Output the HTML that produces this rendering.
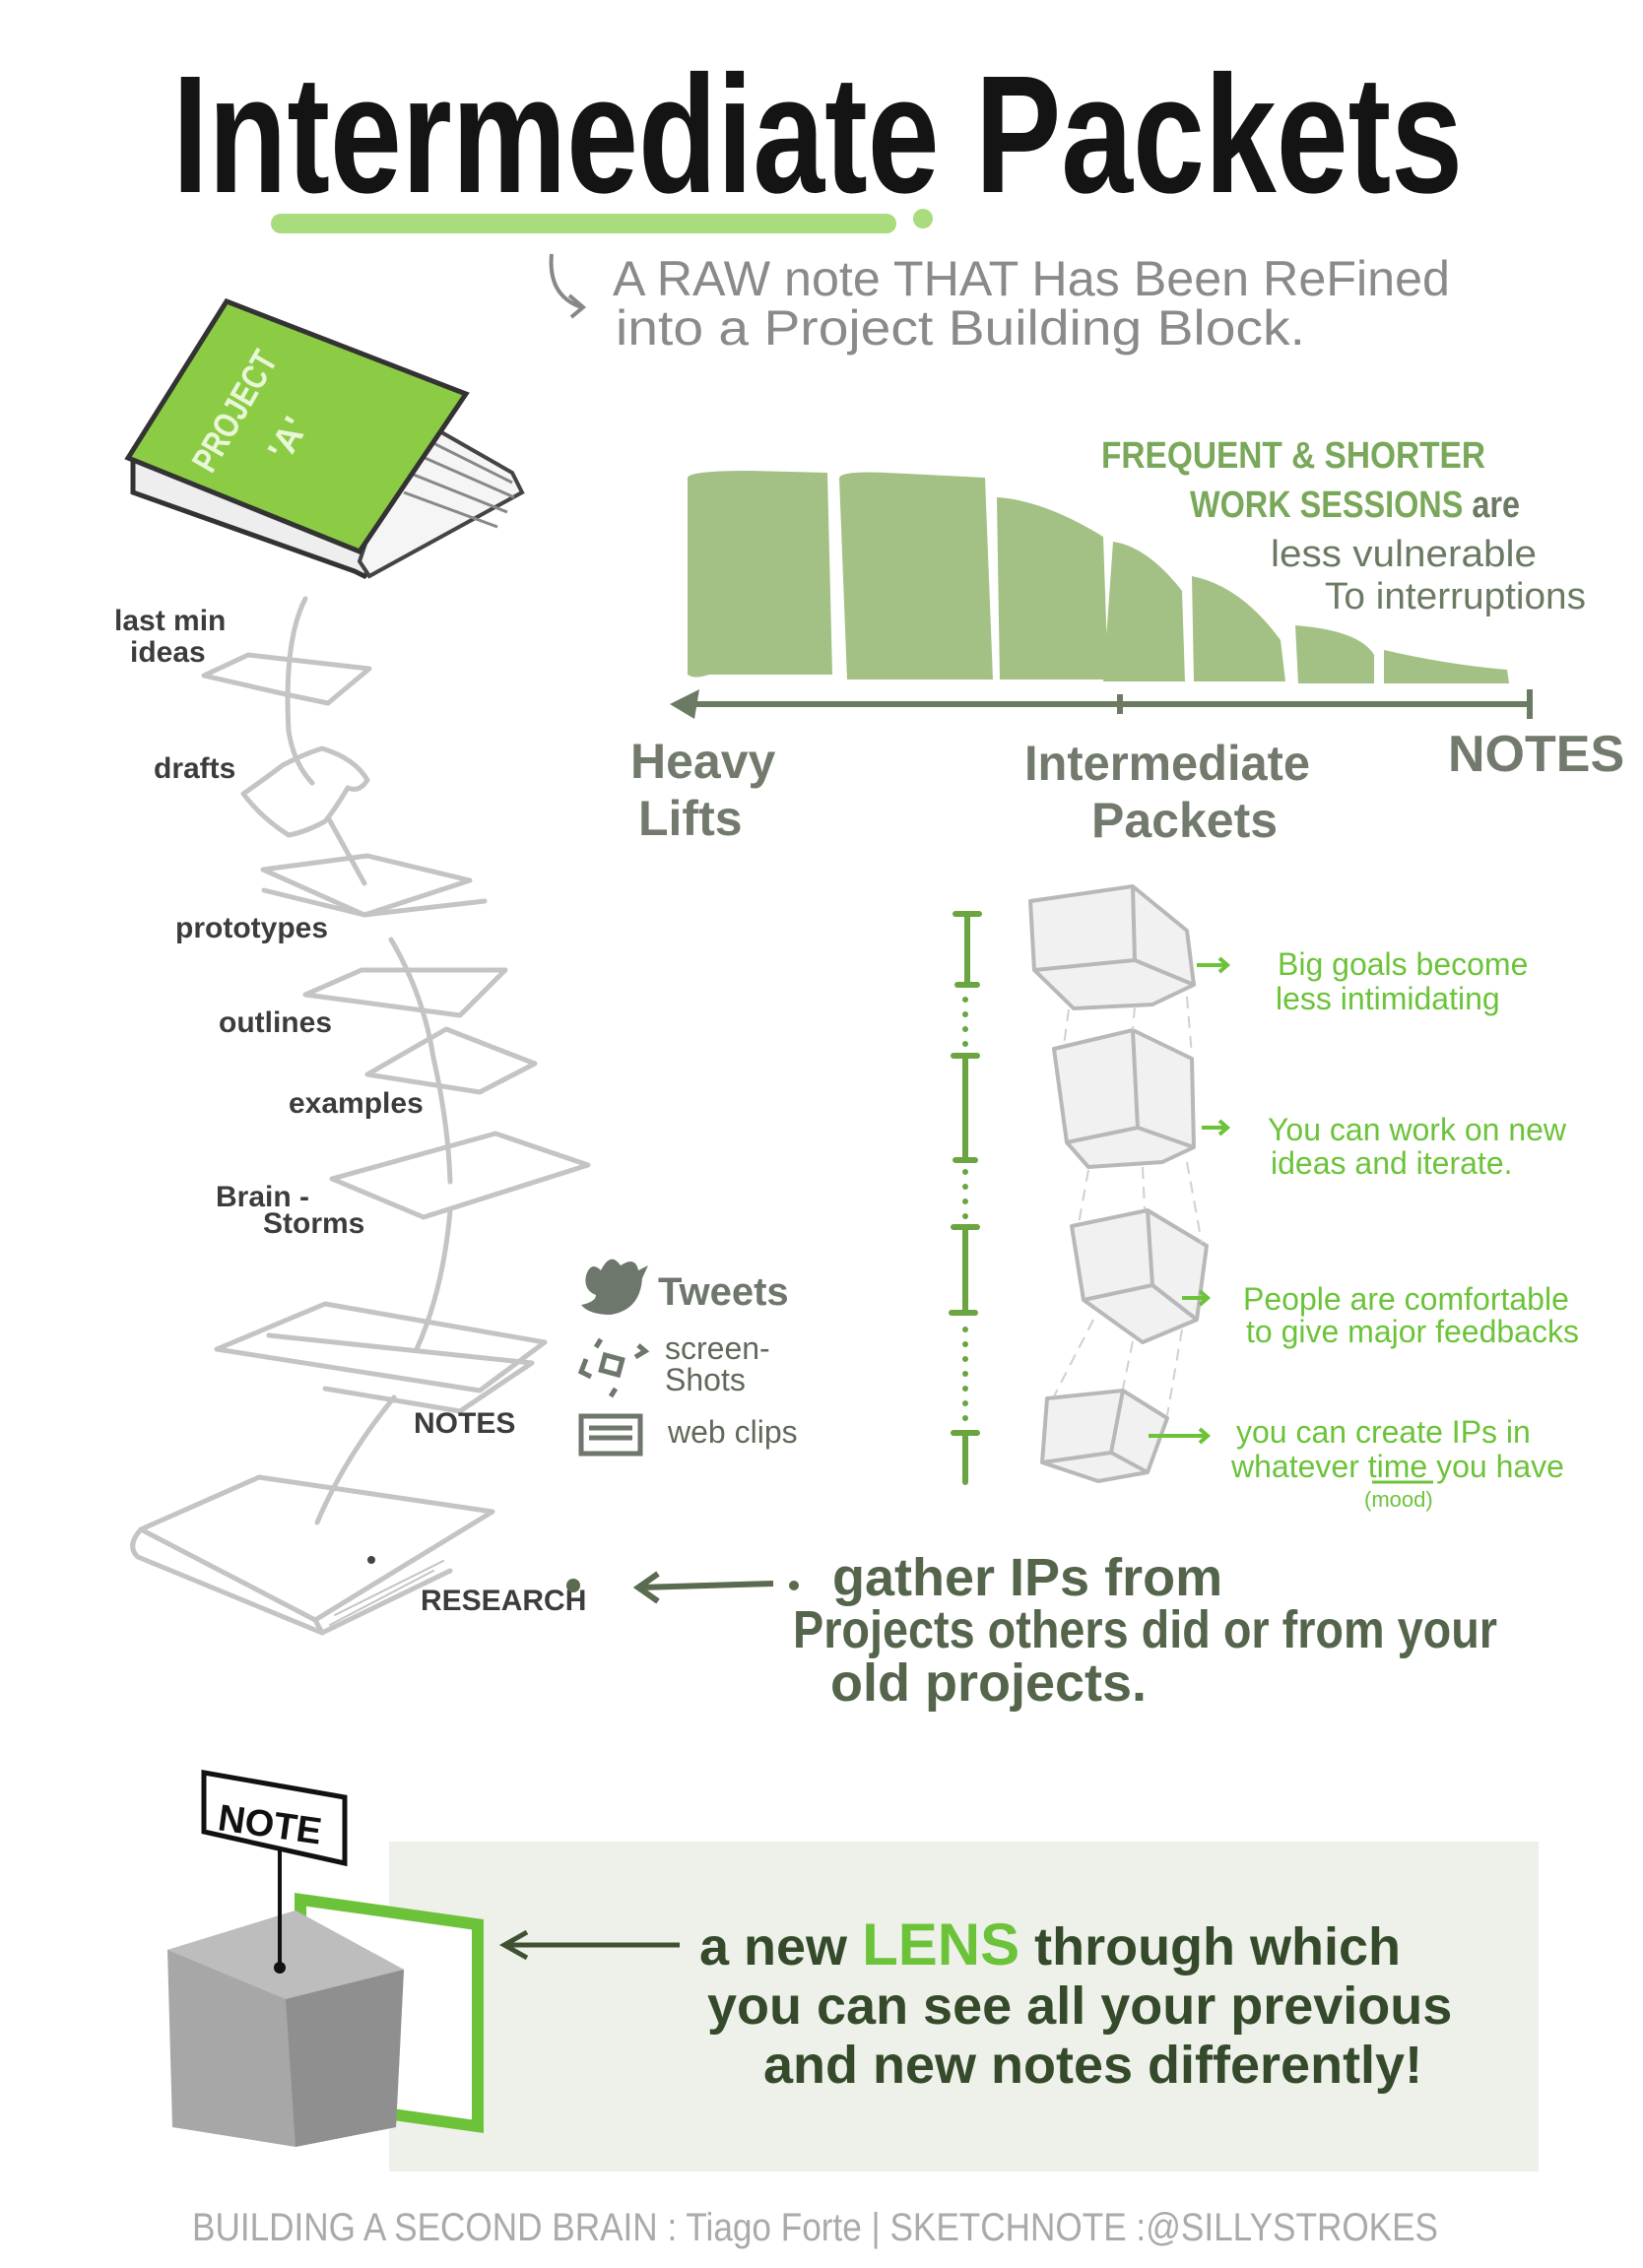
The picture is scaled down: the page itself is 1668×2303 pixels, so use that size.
<!DOCTYPE html>
<html><head><meta charset="utf-8">
<style>
html,body{margin:0;padding:0;background:#fff;}
svg{display:block;}
text{font-family:"Liberation Sans Narrow","Liberation Sans",sans-serif;}
</style></head>
<body>
<svg width="1668" height="2303" viewBox="0 0 1668 2303" xmlns="http://www.w3.org/2000/svg">
<!-- Title -->
<text x="830" y="195" text-anchor="middle" font-size="170" font-weight="bold" fill="#141414" textLength="1310" lengthAdjust="spacingAndGlyphs">Intermediate Packets</text>
<line x1="285" y1="227" x2="900" y2="227" stroke="#a8dc7d" stroke-width="20" stroke-linecap="round"/>
<circle cx="937" cy="222" r="10" fill="#a8dc7d"/>
<!-- subtitle -->
<path d="M560 258 Q556 300 590 312 M578 300 L592 312 L580 322" stroke="#888" stroke-width="4" fill="none"/>
<text x="622" y="300" font-size="50" fill="#8a8a8a" textLength="850" lengthAdjust="spacingAndGlyphs">A RAW note THAT Has Been ReFined</text>
<text x="625" y="350" font-size="50" fill="#8a8a8a" textLength="700" lengthAdjust="spacingAndGlyphs">into a Project Building Block.</text>
<!-- Book -->
<polygon points="135,460 415,540 370,585 360,580 135,500" fill="#eee" stroke="#333" stroke-width="5"/>
<polygon points="415,420 520,480 530,500 375,585 365,570" fill="#f5f5f5" stroke="#444" stroke-width="4"/>
<path d="M420 440 L520 490 M420 460 L522 505 M415 480 L515 520 M410 500 L505 535" stroke="#888" stroke-width="3" fill="none"/>
<polygon points="230,306 473,400 365,560 130,465" fill="#8ccc45" stroke="#333" stroke-width="5"/>
<text x="0" y="0" font-size="36" font-weight="bold" fill="#e8f7d8" transform="translate(215,482) rotate(-60)" textLength="135" lengthAdjust="spacingAndGlyphs">PROJECT</text>
<text x="0" y="0" font-size="36" font-weight="bold" fill="#e8f7d8" transform="translate(292,470) rotate(-60)">'A'</text>
<!-- Bars -->
<g fill="#a3c185">
<path d="M698 485 Q700 478 760 478 L840 480 L845 685 L720 685 Q705 690 698 685 Z"/>
<path d="M852 485 Q855 478 900 480 L1000 485 L1008 690 L860 690 Z"/>
<path d="M1012 505 Q1060 508 1120 545 L1125 690 L1015 690 Z"/>
<path d="M1130 550 Q1165 555 1200 600 L1203 692 L1120 692 Z"/>
<path d="M1210 585 Q1260 595 1300 650 L1305 692 L1212 692 Z"/>
<path d="M1315 635 Q1380 640 1395 665 L1395 694 L1318 694 Z"/>
<path d="M1405 660 Q1470 675 1530 680 L1532 694 L1405 694 Z"/>
</g>
<line x1="700" y1="715" x2="1553" y2="715" stroke="#6b7a62" stroke-width="6"/>
<polygon points="680,715 710,700 705,730" fill="#6b7a62"/>
<line x1="1553" y1="700" x2="1553" y2="730" stroke="#6b7a62" stroke-width="6"/>
<line x1="1137" y1="705" x2="1137" y2="725" stroke="#6b7a62" stroke-width="6"/>
<text x="640" y="790" font-size="50" font-weight="bold" fill="#717a6c">Heavy</text>
<text x="648" y="848" font-size="50" font-weight="bold" fill="#717a6c">Lifts</text>
<text x="1040" y="792" font-size="50" font-weight="bold" fill="#717a6c" textLength="290" lengthAdjust="spacingAndGlyphs">Intermediate</text>
<text x="1108" y="850" font-size="50" font-weight="bold" fill="#717a6c">Packets</text>
<text x="1470" y="783" font-size="52" font-weight="bold" fill="#717a6c">NOTES</text>
<g font-size="38" fill="#7aa85a" font-weight="bold">
<text x="1118" y="475" textLength="390" lengthAdjust="spacingAndGlyphs">FREQUENT &amp; SHORTER</text>
<text x="1208" y="525" textLength="335" lengthAdjust="spacingAndGlyphs">WORK SESSIONS <tspan fill="#6b7a62">are</tspan></text>
</g>
<g font-size="38" fill="#6b7a62">
<text x="1290" y="575" textLength="270" lengthAdjust="spacingAndGlyphs">less vulnerable</text>
<text x="1345" y="618" textLength="265" lengthAdjust="spacingAndGlyphs">To interruptions</text>
</g>
<!-- paper trail -->
<g stroke="#c4c4c4" stroke-width="5" fill="none" stroke-linejoin="round" stroke-linecap="round">
<path d="M310 608 Q288 650 293 742 Q298 775 317 795 M333 830 L370 897 M397 954 Q430 1010 440 1074 Q455 1140 457 1200 M457 1229 Q450 1310 423 1370 M400 1419 Q350 1480 322 1546"/>
<polygon points="207,686 252,665 375,679 333,714 290,705"/>
<path d="M247 806 Q270 790 287 777 Q310 765 327 760 Q360 770 373 792 Q365 805 353 800 Q340 822 330 834 Q310 845 293 848 Q265 830 247 806"/>
<polygon points="267,883 373,869 477,894 370,929"/>
<polyline points="268,904 370,929 492,915"/>
<polygon points="310,1010 367,985 513,985 467,1031"/>
<polygon points="373,1091 453,1045 543,1080 487,1109"/>
<polygon points="337,1197 503,1151 597,1183 430,1236"/>
<polygon points="220,1370 330,1324 553,1363 487,1412"/>
<polyline points="273,1356 540,1384 467,1433 330,1410"/>
<path d="M143 1553 L263 1500 L500 1535 L320 1645 Z"/>
<path d="M143 1553 Q128 1570 140 1581 L327 1658 L457 1595"/>
<path d="M320 1645 L327 1658"/>
<path d="M440 1595 L335 1650 M450 1585 L340 1640" stroke-width="2"/>
</g>
<circle cx="377" cy="1584" r="4" fill="#444"/>
<g font-size="30" fill="#3c3c3c" font-weight="bold">
<text x="116" y="640">last min</text>
<text x="132" y="672">ideas</text>
<text x="156" y="790">drafts</text>
<text x="178" y="952">prototypes</text>
<text x="222" y="1048">outlines</text>
<text x="293" y="1130">examples</text>
<text x="219" y="1225">Brain -</text>
<text x="267" y="1252">Storms</text>
<text x="420" y="1455">NOTES</text>
<text x="427" y="1635">RESEARCH</text>
</g>
<circle cx="582" cy="1610" r="7" fill="#5a6b50"/>
<!-- icons -->
<path d="M595 1295 Q600 1280 610 1290 Q620 1270 630 1285 Q645 1275 648 1290 L658 1285 L652 1298 Q650 1330 620 1335 Q598 1335 590 1325 Q605 1322 605 1315 Q592 1310 595 1295 Z" fill="#6e776b"/>
<text x="668" y="1325" font-size="40" font-weight="bold" fill="#6e776b">Tweets</text>
<g stroke="#6e776b" stroke-width="5" fill="none">
<path d="M595 1380 L590 1393 L600 1398 M610 1360 L605 1368 M645 1378 L655 1372 L648 1366 M625 1410 L620 1418"/>
<rect x="612" y="1378" width="18" height="16" transform="rotate(15 621 1386)"/>
<rect x="590" y="1438" width="60" height="38"/>
<path d="M598 1450 H642 M598 1460 H642"/>
</g>
<text x="675" y="1380" font-size="32" fill="#5f6a5a">screen-</text>
<text x="675" y="1412" font-size="32" fill="#5f6a5a">Shots</text>
<text x="678" y="1465" font-size="32" fill="#5f6a5a">web clips</text>
<!-- dotted timeline -->
<g stroke="#6aa541" stroke-width="6" stroke-linecap="round">
<line x1="982" y1="928" x2="982" y2="1000"/><line x1="970" y1="928" x2="994" y2="928"/><line x1="972" y1="1000" x2="992" y2="1000"/>
<line x1="980" y1="1072" x2="980" y2="1178"/><line x1="968" y1="1072" x2="992" y2="1072"/><line x1="970" y1="1178" x2="990" y2="1178"/>
<line x1="980" y1="1246" x2="980" y2="1333"/><line x1="968" y1="1246" x2="992" y2="1246"/><line x1="966" y1="1333" x2="990" y2="1333"/>
<line x1="980" y1="1455" x2="980" y2="1505"/><line x1="968" y1="1455" x2="992" y2="1455"/>
</g>
<g fill="#6aa541">
<circle cx="980" cy="1015" r="3"/><circle cx="980" cy="1030" r="3"/><circle cx="980" cy="1045" r="3"/><circle cx="980" cy="1060" r="3"/>
<circle cx="980" cy="1190" r="3"/><circle cx="980" cy="1205" r="3"/><circle cx="980" cy="1220" r="3"/><circle cx="980" cy="1235" r="3"/>
<circle cx="980" cy="1350" r="3"/><circle cx="980" cy="1365" r="3"/><circle cx="980" cy="1380" r="3"/><circle cx="980" cy="1395" r="3"/><circle cx="980" cy="1410" r="3"/><circle cx="980" cy="1425" r="3"/><circle cx="980" cy="1440" r="3"/>
</g>
<!-- cubes -->
<g stroke="#b8b8b8" stroke-width="4" fill="#f1f1f1" stroke-linejoin="round">
<polygon points="1046,915 1150,900 1205,945 1212,1000 1170,1020 1090,1024 1050,985"/>
<polyline points="1150,900 1152,975 1212,1000" fill="none"/><polyline points="1050,985 1152,975" fill="none"/>
<polygon points="1070,1065 1150,1046 1210,1075 1212,1165 1180,1180 1105,1185 1083,1160"/>
<polyline points="1150,1046 1155,1145 1212,1165" fill="none"/><polyline points="1083,1160 1155,1145" fill="none"/>
<polygon points="1088,1245 1165,1229 1225,1265 1215,1340 1160,1363 1100,1320"/>
<polyline points="1165,1229 1170,1305 1215,1340" fill="none"/><polyline points="1100,1320 1170,1305" fill="none"/>
<polygon points="1063,1420 1140,1412 1185,1440 1165,1495 1115,1504 1058,1485"/>
<polyline points="1140,1412 1128,1475 1165,1495" fill="none"/><polyline points="1058,1485 1128,1475" fill="none"/>
</g>
<g stroke="#d0d0d0" stroke-width="2" stroke-dasharray="12 8">
<line x1="1085" y1="1025" x2="1080" y2="1062"/><line x1="1152" y1="1022" x2="1150" y2="1046"/><line x1="1205" y1="1012" x2="1210" y2="1072"/>
<line x1="1105" y1="1188" x2="1095" y2="1243"/><line x1="1160" y1="1185" x2="1162" y2="1228"/><line x1="1205" y1="1180" x2="1220" y2="1262"/>
<line x1="1110" y1="1340" x2="1070" y2="1418"/><line x1="1150" y1="1362" x2="1140" y2="1410"/><line x1="1200" y1="1350" x2="1185" y2="1437"/>
</g>
<g stroke="#6cc33a" stroke-width="4" fill="none">
<path d="M1215 980 H1245 M1238 973 L1246 980 L1238 987"/>
<path d="M1220 1145 H1245 M1238 1138 L1246 1145 L1238 1152"/>
<path d="M1200 1318 H1225 M1218 1311 L1226 1318 L1218 1325"/>
<path d="M1166 1458 H1225 M1218 1451 L1226 1458 L1218 1465"/>
</g>
<g font-size="32" fill="#6cc33a">
<text x="1297" y="990">Big goals become</text>
<text x="1295" y="1025">less intimidating</text>
<text x="1287" y="1158">You can work on new</text>
<text x="1290" y="1192">ideas and iterate.</text>
<text x="1262" y="1330">People are comfortable</text>
<text x="1265" y="1363">to give major feedbacks</text>
<text x="1255" y="1465">you can create IPs in</text>
<text x="1250" y="1500">whatever time you have</text>
<text x="1385" y="1530" font-size="22">(mood)</text>
</g>
<line x1="1393" y1="1505" x2="1455" y2="1505" stroke="#6cc33a" stroke-width="3"/>
<!-- gather -->
<path d="M785 1608 L650 1612 M668 1598 L648 1612 L668 1626" stroke="#5a6b50" stroke-width="6" fill="none"/>
<circle cx="806" cy="1610" r="5" fill="#5a6b50"/>
<g font-size="54" fill="#55654c" font-weight="bold">
<text x="845" y="1620">gather IPs from</text>
<text x="805" y="1673" textLength="715" lengthAdjust="spacingAndGlyphs">Projects others did or from your</text>
<text x="843" y="1727">old projects.</text>
</g>
<!-- bottom box -->
<rect x="395" y="1870" width="1167" height="335" fill="#eef1ea"/>
<rect x="305" y="1928" width="180" height="205" fill="#fff" stroke="#6cc33a" stroke-width="12" transform="skewY(8) translate(0,-42)"/>
<polygon points="170,1980 300,1940 410,2000 402,2160 300,2180 175,2160" fill="#a7a7a7"/>
<polygon points="170,1980 300,1940 410,2000 290,2030" fill="#bdbdbd"/>
<polygon points="290,2030 410,2000 402,2160 300,2180" fill="#8f8f8f"/>
<line x1="284" y1="1855" x2="284" y2="1995" stroke="#111" stroke-width="4"/>
<circle cx="284" cy="1998" r="6" fill="#111"/>
<polygon points="207,1800 350,1825 350,1892 207,1860" fill="#fff" stroke="#111" stroke-width="5"/>
<text x="220" y="1858" font-size="38" font-weight="bold" fill="#111" transform="rotate(8 220 1858)">NOTE</text>
<path d="M690 1975 L515 1975 M535 1962 L512 1975 L535 1988" stroke="#3e5233" stroke-width="5" fill="none"/>
<g font-size="54" fill="#344a2a" font-weight="bold">
<text x="710" y="1995">a new <tspan fill="#6cc33a" font-size="60">LENS</tspan> through which</text>
<text x="718" y="2055">you can see all your previous</text>
<text x="775" y="2115">and new notes differently!</text>
</g>
<!-- footer -->
<text x="195" y="2275" font-size="40" fill="#aaaaaa" textLength="1265" lengthAdjust="spacingAndGlyphs">BUILDING A SECOND BRAIN : Tiago Forte | SKETCHNOTE :@SILLYSTROKES</text>
</svg>
</body></html>
